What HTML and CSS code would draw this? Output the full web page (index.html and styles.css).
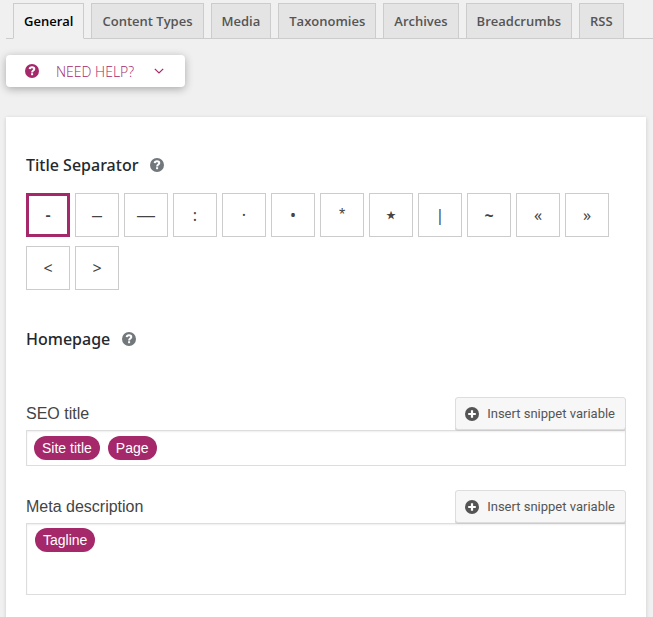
FILE: index.html
```html
<!DOCTYPE html>
<html lang="en">
<head>
<meta charset="utf-8">
<meta name="viewport" content="width=device-width, initial-scale=1">
<title>Search Appearance</title>
<link rel="stylesheet" href="styles.css">
</head>
<body>
<svg class="sprite" aria-hidden="true">
  <symbol id="icon-help" viewBox="0 0 14 14">
    <circle cx="7" cy="7" r="7" fill="currentColor"/>
    <path d="M4.700 5.200C4.800 3.900 5.700 3.300 7 3.300c1.400 0 2.300.7 2.300 1.800C9.300 6.500 7.100 6.600 7.100 8.400" fill="none" stroke="#fff" stroke-width="2"/>
    <rect x="6.100" y="9.200" width="2" height="2" fill="#fff"/>
  </symbol>
  <symbol id="icon-plus" viewBox="0 0 14 14">
    <circle cx="7" cy="7" r="7" fill="currentColor"/>
    <path d="M7 3.200v7.600M3.200 7h7.600" stroke="#fff" stroke-width="2.200"/>
  </symbol>
  <symbol id="icon-chevron" viewBox="0 0 10 10">
    <path d="M0.800 2.800L5 7l4.200-4.200" fill="none" stroke="currentColor" stroke-width="1.200"/>
  </symbol>
</svg>

<nav class="tabs" aria-label="Settings sections">
  <a class="tab tab-active" href="#general" aria-current="page">General</a>
  <a class="tab" href="#content-types">Content Types</a>
  <a class="tab" href="#media">Media</a>
  <a class="tab" href="#taxonomies">Taxonomies</a>
  <a class="tab" href="#archives">Archives</a>
  <a class="tab" href="#breadcrumbs">Breadcrumbs</a>
  <a class="tab" href="#rss">RSS</a>
</nav>

<button class="help-toggle" type="button" aria-expanded="false">
  <svg class="icon"><use href="#icon-help"/></svg>
  <span class="help-text">NEED HELP?</span>
  <svg class="icon-small"><use href="#icon-chevron"/></svg>
</button>

<main class="card" id="general">
  <div class="heading">
    <h2 class="title" id="separator-title">Title Separator</h2>
    <button class="help" type="button" aria-label="Help on title separator"><svg class="icon"><use href="#icon-help"/></svg></button>
  </div>
  <div class="separators" role="radiogroup" aria-labelledby="separator-title">
    <label class="separator"><input type="radio" name="separator" checked><span>-</span></label>
    <label class="separator separator-dash"><input type="radio" name="separator"><span>–</span></label>
    <label class="separator separator-dash"><input type="radio" name="separator"><span>—</span></label>
    <label class="separator"><input type="radio" name="separator"><span>:</span></label>
    <label class="separator"><input type="radio" name="separator"><span>·</span></label>
    <label class="separator"><input type="radio" name="separator"><span>•</span></label>
    <label class="separator separator-asterisk"><input type="radio" name="separator"><span>*</span></label>
    <label class="separator separator-star"><input type="radio" name="separator"><span>⋆</span></label>
    <label class="separator"><input type="radio" name="separator"><span>|</span></label>
    <label class="separator separator-tilde"><input type="radio" name="separator"><span>~</span></label>
    <label class="separator"><input type="radio" name="separator"><span>«</span></label>
    <label class="separator"><input type="radio" name="separator"><span>»</span></label>
    <label class="separator"><input type="radio" name="separator"><span>&lt;</span></label>
    <label class="separator"><input type="radio" name="separator"><span>&gt;</span></label>
  </div>

  <div class="heading heading-home">
    <h2 class="title">Homepage</h2>
    <button class="help" type="button" aria-label="Help on homepage"><svg class="icon"><use href="#icon-help"/></svg></button>
  </div>

  <div class="field">
    <div class="field-head">
      <label class="field-label" for="seo-title">SEO title</label>
      <button class="insert" type="button"><svg class="icon"><use href="#icon-plus"/></svg>Insert snippet variable</button>
    </div>
    <div class="editor">
      <span class="chip">Site title</span>
      <span class="chip">Page</span>
      <input class="entry" id="seo-title" type="text">
    </div>
  </div>

  <div class="field">
    <div class="field-head">
      <label class="field-label" for="meta-description">Meta description</label>
      <button class="insert" type="button"><svg class="icon"><use href="#icon-plus"/></svg>Insert snippet variable</button>
    </div>
    <div class="editor editor-tall">
      <span class="chip">Tagline</span>
      <textarea class="entry" id="meta-description" rows="3"></textarea>
    </div>
  </div>
</main>
</body>
</html>
```
FILE: styles.css
```css
* {
  box-sizing: border-box;
}

html {
  background: #f0f0f0;
}

body {
  min-height: 100vh;
  margin: 0;
  padding: 3px 7px 0 6px;
  display: flex;
  flex-direction: column;
  align-items: flex-start;
  color: #444;
  font-family: "Noto Sans", "Open Sans", sans-serif;
}

button {
  cursor: pointer;
}

.sprite {
  display: none;
}

.icon {
  width: 14px;
  height: 14px;
  flex: none;
}

.icon-small {
  width: 10px;
  height: 10px;
  flex: none;
}

.tabs {
  align-self: stretch;
  display: flex;
  gap: 7px;
  margin-right: -7px;
  padding-left: 7px;
  border-bottom: 1px solid #ccc;
}

.tab {
  margin-bottom: -1px;
  padding: 5px 10px;
  border: 1px solid #ccc;
  background: #e4e4e4;
  color: #555;
  font-family: "Open Sans", sans-serif;
  font-size: 13px;
  font-weight: 600;
  line-height: 24px;
  white-space: nowrap;
  text-decoration: none;
}

.tab-active {
  border-bottom-color: #f0f0f0;
  background: #f0f0f0;
  color: #000;
}

.help-toggle {
  display: flex;
  align-items: center;
  height: 32px;
  margin: 16px 0 30px;
  padding: 0 21px 0 19px;
  border: 0;
  border-radius: 4px;
  background: #fff;
  box-shadow: 0 2px 8px rgba(0, 0, 0, 0.3);
  color: #a4286a;
  font-family: "Open Sans", sans-serif;
  font-size: 14px;
  font-weight: 300;
}

.help-text {
  margin: 0 20px 0 17px;
}

.card {
  align-self: stretch;
  flex: 1;
  padding: 36px 20px 22px;
  background: #fff;
  box-shadow: 0 1px 4px rgba(0, 0, 0, 0.15);
}

.heading {
  display: flex;
  align-items: center;
  gap: 12px;
}

.heading-home {
  margin: 37px 0 46px;
}

.title {
  margin: 0;
  color: #23282d;
  font-size: 16px;
  font-weight: 500;
  line-height: 24px;
}

.help {
  display: flex;
  padding: 0;
  border: 0;
  background: none;
  color: #72777c;
}

.separators {
  display: flex;
  flex-wrap: wrap;
  gap: 9px 5px;
  margin-top: 16px;
}

.separator {
  position: relative;
  display: flex;
  align-items: center;
  justify-content: center;
  width: 44px;
  height: 44px;
  border: 1px solid #ccc;
  font-size: 16px;
  cursor: pointer;
}

.separator input {
  position: absolute;
  inset: 0;
  margin: 0;
  opacity: 0;
}

.separator:has(input:checked) {
  border: 3px solid #a4286a;
  font-weight: 600;
}

.separator-dash {
  font-family: "Liberation Sans", Arial, sans-serif;
  font-size: 18px;
}

.separator-asterisk {
  font-family: "Liberation Sans", Arial, sans-serif;
}

.separator-star {
  font-family: "DejaVu Sans", sans-serif;
  font-size: 24px;
}

.separator-tilde {
  font-weight: 700;
}

.field {
  margin-bottom: 24px;
}

.field-head {
  display: flex;
  align-items: center;
  justify-content: space-between;
}

.field-label {
  font-family: "Liberation Sans", Arial, sans-serif;
  font-size: 16px;
}

.insert {
  display: flex;
  align-items: center;
  gap: 8px;
  height: 33px;
  padding: 0 10px 0 9px;
  border: 1px solid #ddd;
  border-radius: 3px;
  background: #f7f7f7;
  box-shadow: 0 1px 0 #ccc;
  color: #555;
  font-family: Roboto, sans-serif;
  font-size: 13px;
}

.editor {
  display: flex;
  align-items: flex-start;
  gap: 8px;
  height: 36px;
  padding: 5px 7px;
  border: 1px solid #ddd;
  background: #fff;
  box-shadow: inset 0 1px 2px rgba(0, 0, 0, 0.07);
}

.editor-tall {
  height: 72px;
  padding: 4px 8px;
}

.chip {
  padding: 0 8px;
  border-radius: 12px;
  background: #a4286a;
  color: #fff;
  font-family: "Liberation Sans", Arial, sans-serif;
  font-size: 14px;
  line-height: 24px;
}

.entry {
  flex: 1;
  min-width: 0;
  align-self: stretch;
  padding: 0;
  border: 0;
  outline: 0;
  background: none;
  resize: none;
  font-family: "Liberation Sans", Arial, sans-serif;
  font-size: 14px;
}
```
